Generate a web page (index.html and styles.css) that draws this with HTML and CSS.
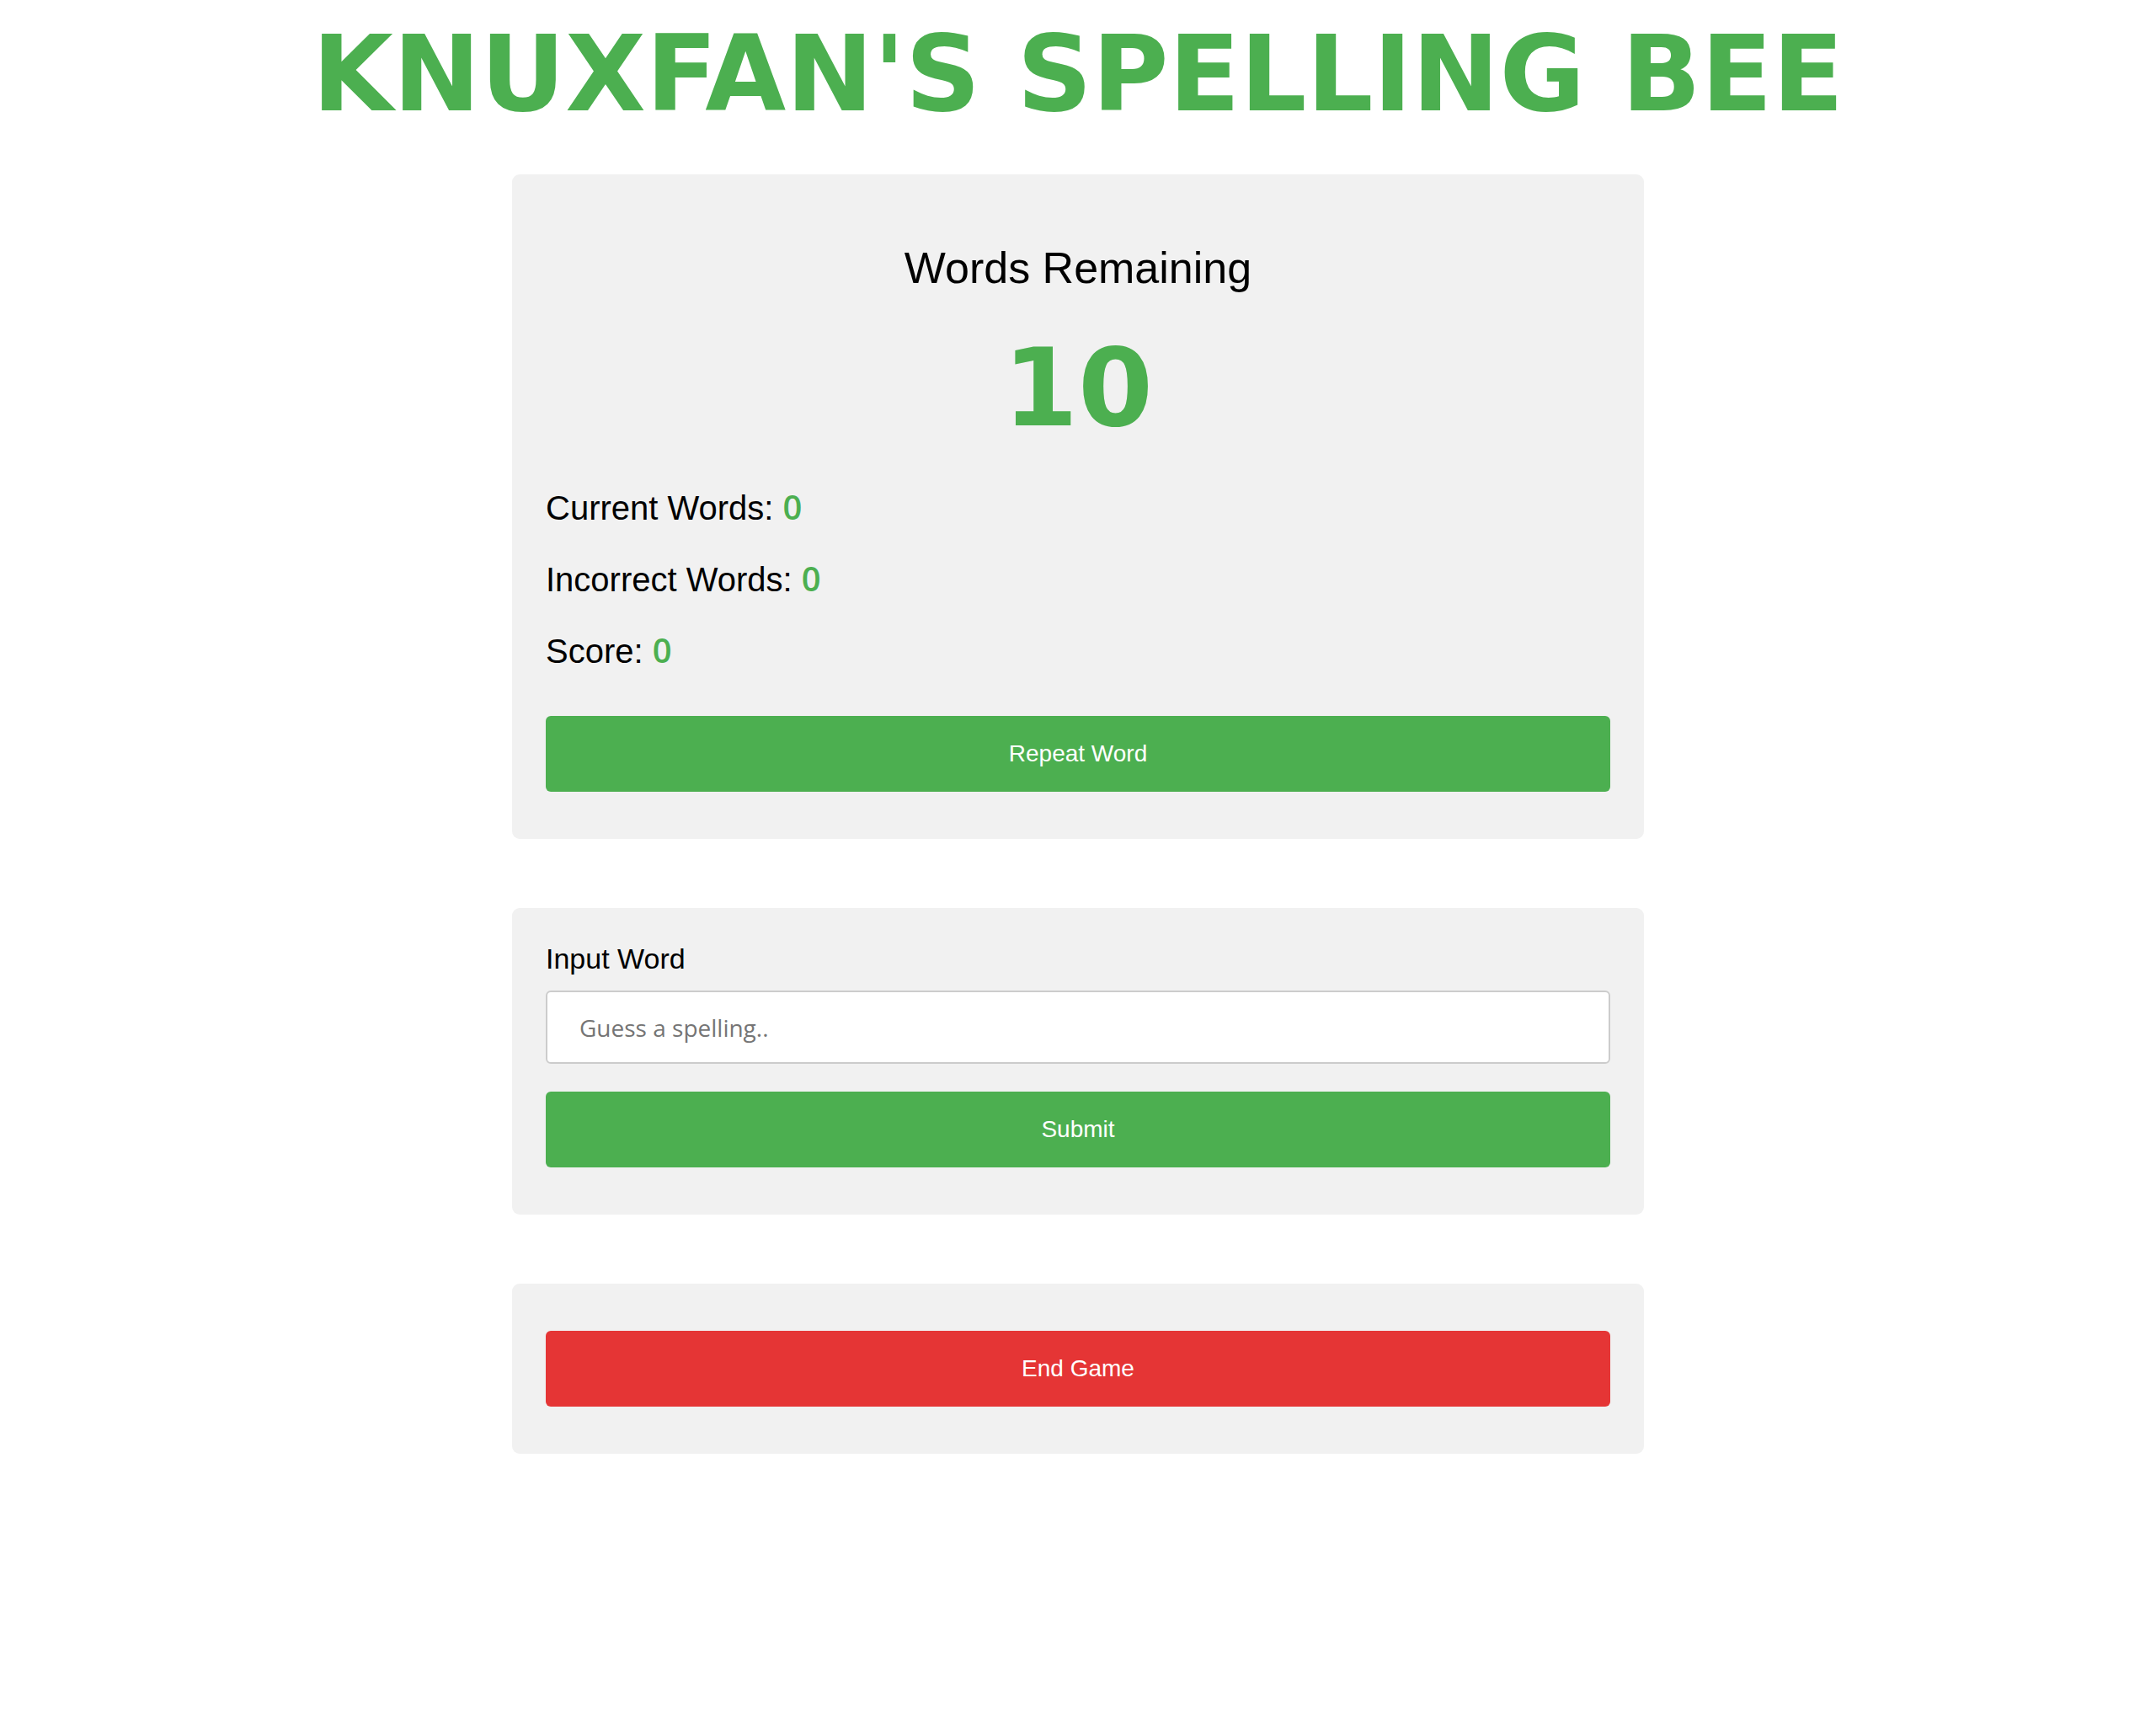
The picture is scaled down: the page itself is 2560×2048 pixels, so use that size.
FILE: index.html
```html
<!DOCTYPE html>
<html lang="en">
<head>
<meta charset="utf-8">
<title>Knuxfan's Spelling Bee</title>
<link rel="stylesheet" href="styles.css">
</head>
<body>
  <h1 class="title">KNUXFAN'S SPELLING BEE</h1>
  <main class="cards">
    <section class="card card-status">
      <h2 class="remaining-label">Words Remaining</h2>
      <div class="remaining-count">10</div>
      <p class="stat">Current Words: <span class="stat-value">0</span></p>
      <p class="stat">Incorrect Words: <span class="stat-value">0</span></p>
      <p class="stat">Score: <span class="stat-value">0</span></p>
      <button class="btn btn-green btn-repeat" type="button">Repeat Word</button>
    </section>
    <section class="card card-input">
      <label class="input-label" for="guess">Input Word</label>
      <input class="guess-input" id="guess" type="text" placeholder="Guess a spelling..">
      <button class="btn btn-green btn-submit" type="button">Submit</button>
    </section>
    <section class="card card-end">
      <button class="btn btn-red" type="button">End Game</button>
    </section>
  </main>
</body>
</html>
```

FILE: styles.css
```css
html, body {
  margin: 0;
  padding: 0;
  background: #ffffff;
}

body {
  font-family: "Liberation Sans", Arial, sans-serif;
  color: #000000;
  padding-top: 26px;
  padding-bottom: 200px;
}

.title {
  margin: 0;
  font-family: "DejaVu Sans", sans-serif;
  font-weight: bold;
  font-size: 124px;
  line-height: 124px;
  color: #4caf50;
  text-align: center;
}

.cards {
  display: flex;
  flex-direction: column;
  align-items: center;
  gap: 82px;
  margin-top: 57px;
}

.card {
  width: 1264px;
  padding: 40px;
  background: #f1f1f1;
  border-radius: 9px;
  display: flex;
  flex-direction: column;
}

.remaining-label {
  margin: 45px 0 0;
  font-size: 52px;
  line-height: 52px;
  font-weight: normal;
  text-align: center;
}

.remaining-count {
  margin-top: 53px;
  font-family: "DejaVu Sans", sans-serif;
  font-weight: bold;
  font-size: 128px;
  line-height: 128px;
  color: #4caf50;
  text-align: center;
}

.stat {
  margin: 45px 0 0;
  font-size: 40px;
  line-height: 40px;
  height: 40px;
}

.remaining-count + .stat {
  margin-top: 58px;
}

.stat-value {
  font-family: "Open Sans", sans-serif;
  font-weight: 600;
  line-height: 0;
  color: #4caf50;
}

.btn {
  display: block;
  width: 100%;
  height: 90px;
  margin: 16px 0;
  border: none;
  border-radius: 6px;
  font-family: "Liberation Sans", Arial, sans-serif;
  font-size: 28px;
  color: #ffffff;
  cursor: pointer;
}

.btn-green {
  background: #4caf50;
}

.btn-red {
  background: #e53535;
}

.btn-repeat {
  margin-top: 57px;
}

.input-label {
  margin-top: 3px;
  font-size: 34px;
  line-height: 34px;
}

.guess-input {
  margin-top: 21px;
  height: 87px;
  box-sizing: border-box;
  padding: 0 38px;
  border: 2px solid #cccccc;
  border-radius: 6px;
  background: #ffffff;
  font-family: "Open Sans", sans-serif;
  font-size: 28px;
  color: #000000;
}

.guess-input::placeholder {
  color: #757575;
}

.btn-submit {
  margin-top: 33px;
}
```
